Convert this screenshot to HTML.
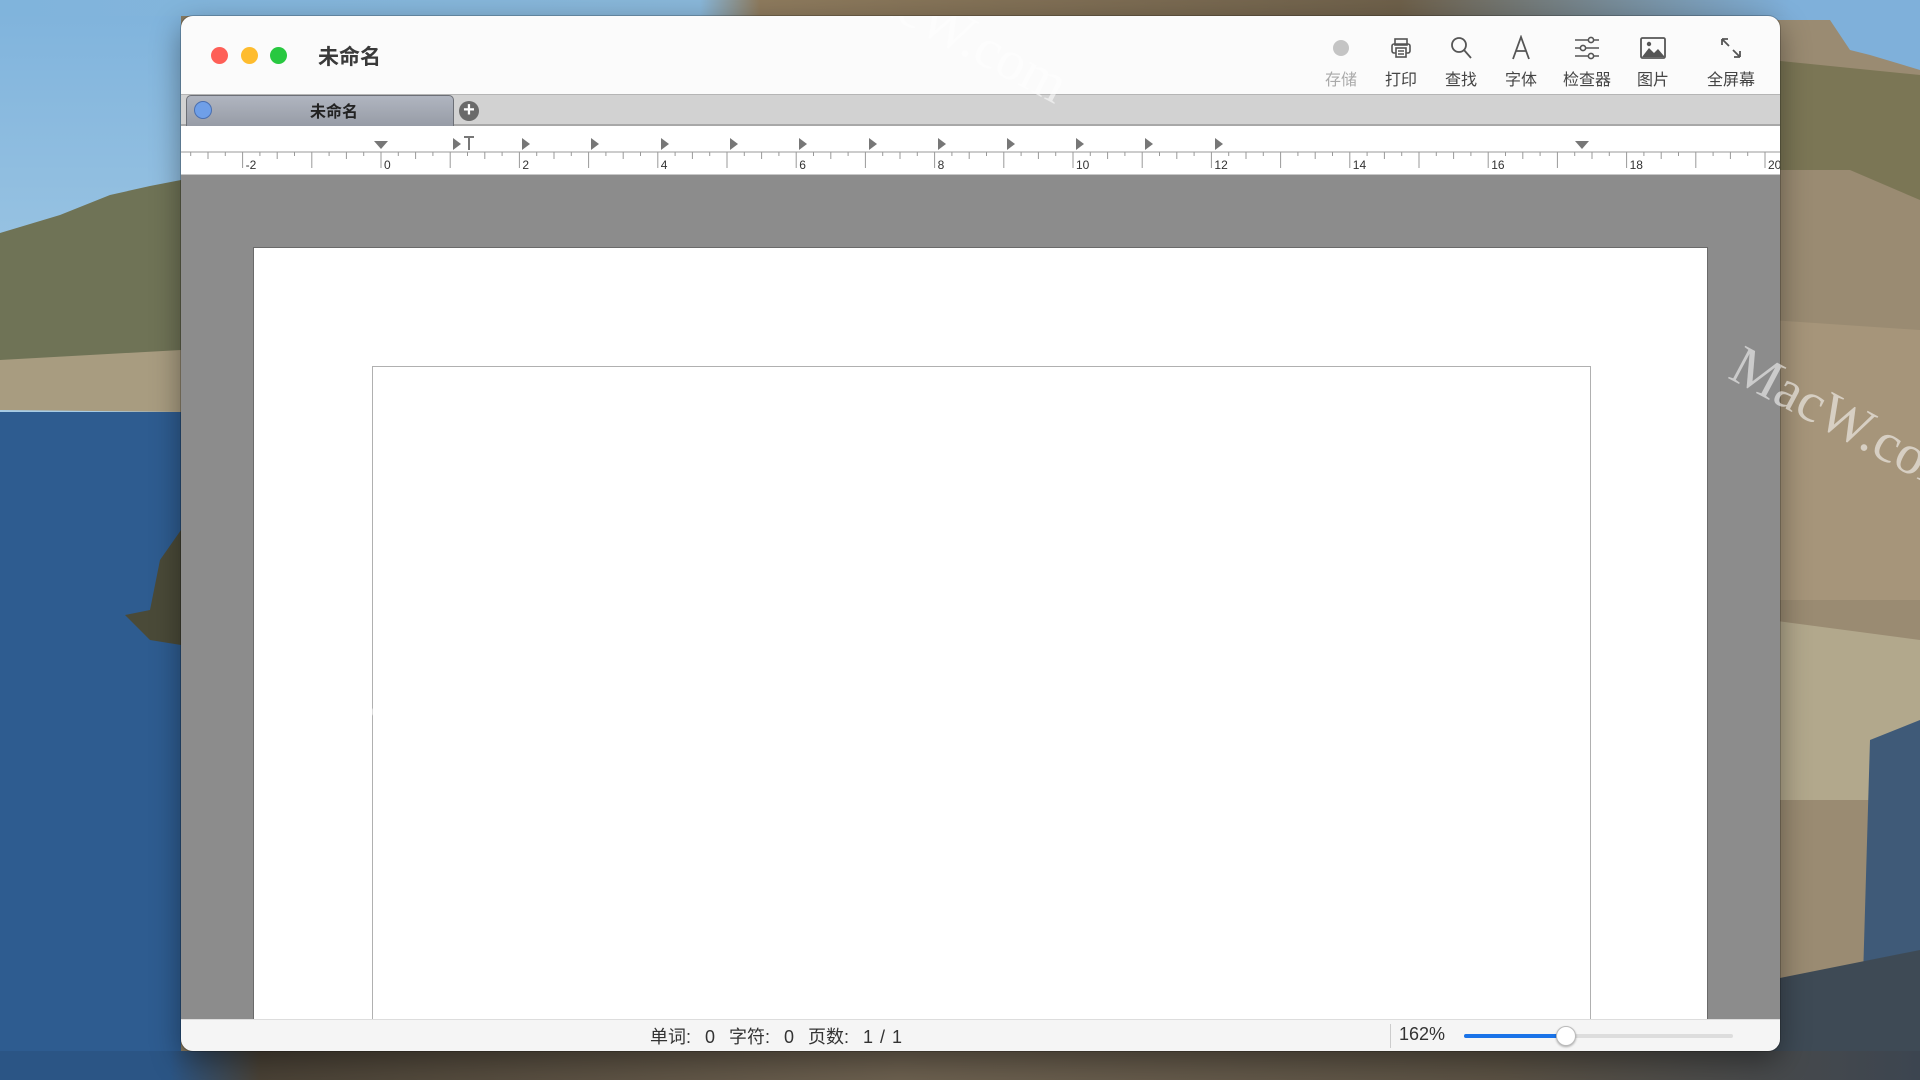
<!DOCTYPE html>
<html><head><meta charset="utf-8">
<style>
*{margin:0;padding:0;box-sizing:border-box}
html,body{width:1920px;height:1080px;overflow:hidden}
body{position:relative;font-family:"Liberation Sans","Noto Sans CJK SC",sans-serif;
background:linear-gradient(90deg,#2f5f93 0,#2f5f93 181px,#8a7c62 181px,#8a7c62 100%)}
.bg{position:absolute}
.win{position:absolute;left:181px;top:16px;width:1599px;height:1035px;border-radius:12px;overflow:hidden;background:#8c8c8c;box-shadow:0 0 0 1px rgba(0,0,0,.2),0 10px 30px rgba(0,0,0,.4)}
.title{position:absolute;left:0;top:0;width:100%;height:78px;background:#fbfbfb}
.tl{position:absolute;top:31px;width:17px;height:17px;border-radius:50%}
.tabbar{position:absolute;left:0;top:78px;width:100%;height:32px;background:#d2d2d2;border-top:1px solid #b5b5b5;border-bottom:2px solid #a8a8a8}
.ruler{position:absolute;left:0;top:110px;width:100%;height:49px;background:#fff;border-bottom:1px solid #c8c8c8}
.tb{position:absolute;top:19px;width:80px;text-align:center;font-size:16px;color:#444;line-height:18px}
.tb svg{display:block;margin:0 auto 11px;height:26px}
.page{position:absolute;left:72px;top:231px;width:1455px;height:790px;background:#fff;border:1px solid #6a6a6a;border-bottom:none}
.frame{position:absolute;left:118px;top:118px;width:1219px;height:700px;border:1px solid #b0b0b0;border-bottom:none}
.status{position:absolute;left:0;top:1003px;width:100%;height:32px;background:#f5f5f5;border-top:1px solid #ddd;font-size:18px;color:#333}
.wm{position:absolute;color:rgba(255,255,255,.55);font-family:"Liberation Serif",serif;font-size:56px;white-space:nowrap}
</style></head><body>
<div class="bg" style="left:0;top:0;width:181px;height:420px;background:linear-gradient(#7fb3dc,#a8cde6)"></div>
<svg class="bg" style="left:0;top:0" width="181" height="1080">
<path d="M0 233 L60 215 L110 195 L150 186 L181 180 L181 410 L0 410Z" fill="#6f7356"/>
<path d="M0 360 L181 350 L181 412 L0 410Z" fill="#a89c80"/>
<rect x="0" y="412" width="181" height="668" fill="#2e5c90"/>
<path d="M181 530 L160 560 L150 610 L125 615 L150 640 L181 645Z" fill="#4a4a38"/>
</svg>
<svg class="bg" style="left:1770px;top:0" width="150" height="1080">
<rect width="150" height="1080" fill="#7fb0da"/>
<path d="M0 20 L60 20 L80 50 L100 55 L150 70 L150 1080 L0 1080Z" fill="#9a8b72"/>
<path d="M0 60 L150 75 L150 200 L80 170 L0 170Z" fill="#7b7655"/>
<path d="M0 320 L150 330 L150 600 L0 600Z" fill="#a6957a"/>
<path d="M0 620 L150 640 L150 800 L0 800Z" fill="#b2a88c"/>
<path d="M100 740 L150 720 L150 1080 L90 1080Z" fill="#3f5a78"/>
<path d="M0 980 L150 950 L150 1080 L0 1080Z" fill="#3e4a55"/>
</svg>
<div class="bg" style="left:0;top:0;width:1920px;height:16px;background:linear-gradient(90deg,#80b4dc 0,#89b7d9 700px,#8d7a5d 760px,#6e604a 1400px,#7fb0da 1790px)"></div>
<div class="bg" style="left:0;top:1051px;width:1920px;height:29px;background:linear-gradient(90deg,#2b5585 0,#2b5585 170px,#4a4236 260px,#6d6150 900px,#5b5244 1500px,#3c4550 1920px)"></div>

<div class="win">
 <div class="title">
  <div class="tl" style="left:30px;background:#fe5f57"></div>
  <div class="tl" style="left:60px;background:#febc2e"></div>
  <div class="tl" style="left:89px;background:#28c840"></div>
  <div style="position:absolute;left:137px;top:25px;font-size:21px;font-weight:bold;color:#3a3a3a">未命名</div>

  <div class="tb" style="left:1120px;color:#aaa"><svg width="26" viewBox="0 0 26 26"><circle cx="13" cy="13" r="8" fill="#c4c4c4"/></svg>存储</div>
  <div class="tb" style="left:1180px"><svg width="26" viewBox="0 0 26 26" fill="none" stroke="#555" stroke-width="1.6"><rect x="7" y="4" width="12" height="6"/><rect x="4" y="9" width="18" height="9" rx="2"/><rect x="8" y="13" width="10" height="9" fill="#fff"/><line x1="10" y1="16" x2="16" y2="16"/><line x1="10" y1="19" x2="16" y2="19"/></svg>打印</div>
  <div class="tb" style="left:1240px"><svg width="26" viewBox="0 0 26 26" fill="none" stroke="#555" stroke-width="1.8"><circle cx="11" cy="10" r="7"/><line x1="16" y1="15" x2="23" y2="23"/></svg>查找</div>
  <div class="tb" style="left:1300px"><svg width="26" viewBox="0 0 26 26" fill="none" stroke="#555" stroke-width="1.8"><path d="M5 24 L13 2 L21 24 M8 16 H18"/></svg>字体</div>
  <div class="tb" style="left:1366px"><svg width="30" viewBox="0 0 30 26" fill="#fff" stroke="#555" stroke-width="1.6"><line x1="3" y1="5" x2="27" y2="5"/><line x1="3" y1="13" x2="27" y2="13"/><line x1="3" y1="21" x2="27" y2="21"/><circle cx="19" cy="5" r="2.6"/><circle cx="11" cy="13" r="2.6"/><circle cx="19" cy="21" r="2.6"/></svg>检查器</div>
  <div class="tb" style="left:1432px"><svg width="28" viewBox="0 0 28 26"><rect x="2" y="3" width="24" height="20" rx="1.5" fill="none" stroke="#555" stroke-width="1.8"/><path d="M3 22 L10 13 L15 18 L19 14 L25 21 V22Z" fill="#555"/><circle cx="10" cy="9" r="2.2" fill="#555"/></svg>图片</div>
  <div class="tb" style="left:1510px"><svg width="26" viewBox="0 0 26 26" fill="none" stroke="#555" stroke-width="1.8"><path d="M4 4 L11 11 M4 4 V10 M4 4 H10 M22 22 L15 15 M22 22 V16 M22 22 H16"/></svg>全屏幕</div>
 </div>
 <div class="tabbar">
  <div style="position:absolute;left:5px;top:0;width:268px;height:31px;background:linear-gradient(#b0b5c0,#979ca6);border:1px solid #6c6f76;border-bottom:none;border-radius:5px 5px 0 0"></div>
  <div style="position:absolute;left:13px;top:6px;width:18px;height:18px;border-radius:50%;background:#6f9fe8;border:1px solid #4a6fb0"></div>
  <div style="position:absolute;left:113px;top:3px;width:80px;text-align:center;font-size:16px;font-weight:bold;color:#222">未命名</div>
  <div style="position:absolute;left:278px;top:6px;width:20px;height:20px;border-radius:50%;background:#6a6a6a;color:#fff;font-size:20px;line-height:19px;text-align:center;font-weight:bold">+</div>
 </div>
 <div class="ruler"><svg id="rs" width="1599" height="49"></svg></div>
 <div class="page"><div class="frame"></div></div>
 <div class="status">
  <div style="position:absolute;left:469px;top:3px;word-spacing:2px">单词:&nbsp; 0 &nbsp;字符:&nbsp; 0 &nbsp;页数:&nbsp; 1 / 1</div>
  <div style="position:absolute;left:1209px;top:4px;width:1px;height:24px;background:#ccc"></div>
  <div style="position:absolute;left:1218px;top:4px">162%</div>
  <div style="position:absolute;left:1283px;top:14px;width:269px;height:4px;border-radius:2px;background:#ddd"></div>
  <div style="position:absolute;left:1283px;top:14px;width:102px;height:4px;border-radius:2px;background:#1a73e8"></div>
  <div style="position:absolute;left:1375px;top:6px;width:20px;height:20px;border-radius:50%;background:#fff;border:1px solid #bbb;box-shadow:0 1px 2px rgba(0,0,0,.3)"></div>
 </div>
 <div class="wm" style="left:170px;top:720px;transform:rotate(28deg)">MacW.com</div>
 <div class="wm" style="left:640px;top:-20px;transform:rotate(28deg)">MacW.com</div>
</div>
<div class="wm" style="left:1720px;top:390px;transform:rotate(28deg)">MacW.com</div>
<script>
var s=document.getElementById('rs'),h='';
var z=200,u=69.2;
h+='<line x1="0" y1="26" x2="1599" y2="26" stroke="#bbb" stroke-width="1.5"/>';
for(var q=-12;q<=84;q++){var x=z+q*u/4;if(x<0||x>1599)continue;var len=(q%4==0)?16:(q%2==0?7:4);
h+='<line x1="'+x+'" y1="26" x2="'+x+'" y2="'+(26+len)+'" stroke="#999" stroke-width="1"/>';
if(q%8==0){var v=q/4;h+='<text x="'+(x+3)+'" y="43" font-size="12" fill="#333" font-family="Liberation Sans">'+v+'</text>';}}
h+='<path d="M'+(z-7)+' 15 h14 l-7 8z" fill="#777"/>';
h+='<path d="M1394 15 h14 l-7 8z" fill="#777"/>';
h+='<path d="M283 11 h10 M288 11 v13" stroke="#777" stroke-width="2"/>';
var ts=[272,341,410,480,549,618,688,757,826,895,964,1034];
for(var k=0;k<ts.length;k++){var x=ts[k];h+='<path d="M'+x+' 12 v12 l8 -6z" fill="#777"/>';}
s.innerHTML=h;
</script>
</body></html>
